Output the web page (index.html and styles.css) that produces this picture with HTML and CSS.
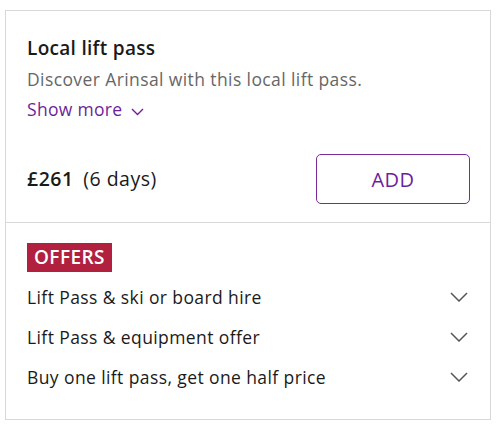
FILE: index.html
```html
<!DOCTYPE html>
<html lang="en">
<head>
    <meta charset="UTF-8">
    <title>Lift pass</title>
    <link rel="stylesheet" href="styles.css">
</head>
<body>

    <div class="card">
        <!-- Pass details -->
        <div class="pass">
            <h2 class="pass-title">Local lift pass</h2>
            <p class="pass-desc">Discover Arinsal with this local lift pass.</p>
            <a class="show-more" href="#">Show more
                <svg width="13" height="8" viewBox="0 0 13 8"><path d="M1 1 L6.5 6.5 L12 1" fill="none" stroke="#6c1f9c" stroke-width="1.4"/></svg>
            </a>

            <div class="pass-footer">
                <div class="price"><span class="amount">£261</span> (6 days)</div>
                <button class="add-button">ADD</button>
            </div>
        </div>

        <!-- Offers -->
        <div class="offers">
            <span class="offers-badge">OFFERS</span>
            <ul class="offer-list">
                <li class="offer">Lift Pass &amp; ski or board hire
                    <svg width="18" height="10" viewBox="0 0 18 10"><path d="M1 1 L9 9 L17 1" fill="none" stroke="#555" stroke-width="1.5"/></svg>
                </li>
                <li class="offer">Lift Pass &amp; equipment offer
                    <svg width="18" height="10" viewBox="0 0 18 10"><path d="M1 1 L9 9 L17 1" fill="none" stroke="#555" stroke-width="1.5"/></svg>
                </li>
                <li class="offer">Buy one lift pass, get one half price
                    <svg width="18" height="10" viewBox="0 0 18 10"><path d="M1 1 L9 9 L17 1" fill="none" stroke="#555" stroke-width="1.5"/></svg>
                </li>
            </ul>
        </div>
    </div>

</body>
</html>
```

FILE: styles.css
```css
* {
    margin: 0;
    padding: 0;
    box-sizing: border-box;
    font-family: "Open Sans", Lato, sans-serif;
}

body {
    background: #fff;
    color: #1a1a1a;
}

.card {
    width: 486px;
    height: 410px;
    margin: 10px 0 0 5px;
    border: 1px solid #d8d8d8;
    display: flex;
    flex-direction: column;
}

/* Pass details */
.pass {
    padding: 24px 20px 0 21px;
    height: 212px;
    border-bottom: 1px solid #d8d8d8;
}

.pass-title {
    font-size: 19px;
    font-weight: 600;
    line-height: 26px;
    letter-spacing: 0.3px;
}

.pass-desc {
    font-size: 17.5px;
    color: #666;
    line-height: 29px;
    margin-top: 4px;
    letter-spacing: 0.4px;
}

.show-more {
    display: inline-flex;
    align-items: center;
    gap: 9px;
    font-size: 17.5px;
    line-height: 30px;
    letter-spacing: 0.3px;
    color: #6c1f9c;
    text-decoration: none;
}

.show-more svg {
    margin-top: 6px;
}

.pass-footer {
    display: flex;
    justify-content: space-between;
    align-items: center;
    margin-top: 30px;
}

.price {
    font-size: 19.5px;
    line-height: 26px;
    letter-spacing: 0.5px;
}

.amount {
    font-weight: 600;
    margin-right: 4px;
}

.add-button {
    width: 154px;
    height: 50px;
    background: #fff;
    border: 1px solid #7b2a9c;
    border-radius: 5px;
    color: #6c1f9c;
    font-size: 20px;
    font-weight: 500;
    letter-spacing: 0.5px;
    cursor: pointer;
}

/* Offers */
.offers {
    padding: 20px 22px 0 21px;
}

.offers-badge {
    display: inline-block;
    background: #b1203f;
    color: #fff;
    font-size: 19px;
    font-weight: 600;
    line-height: 29px;
    letter-spacing: 0.4px;
    padding: 0 7px;
}

.offer-list {
    list-style: none;
    margin-top: 5px;
}

.offer {
    display: flex;
    justify-content: space-between;
    align-items: center;
    font-size: 17.5px;
    line-height: 40px;
    letter-spacing: 0.4px;
}
```
